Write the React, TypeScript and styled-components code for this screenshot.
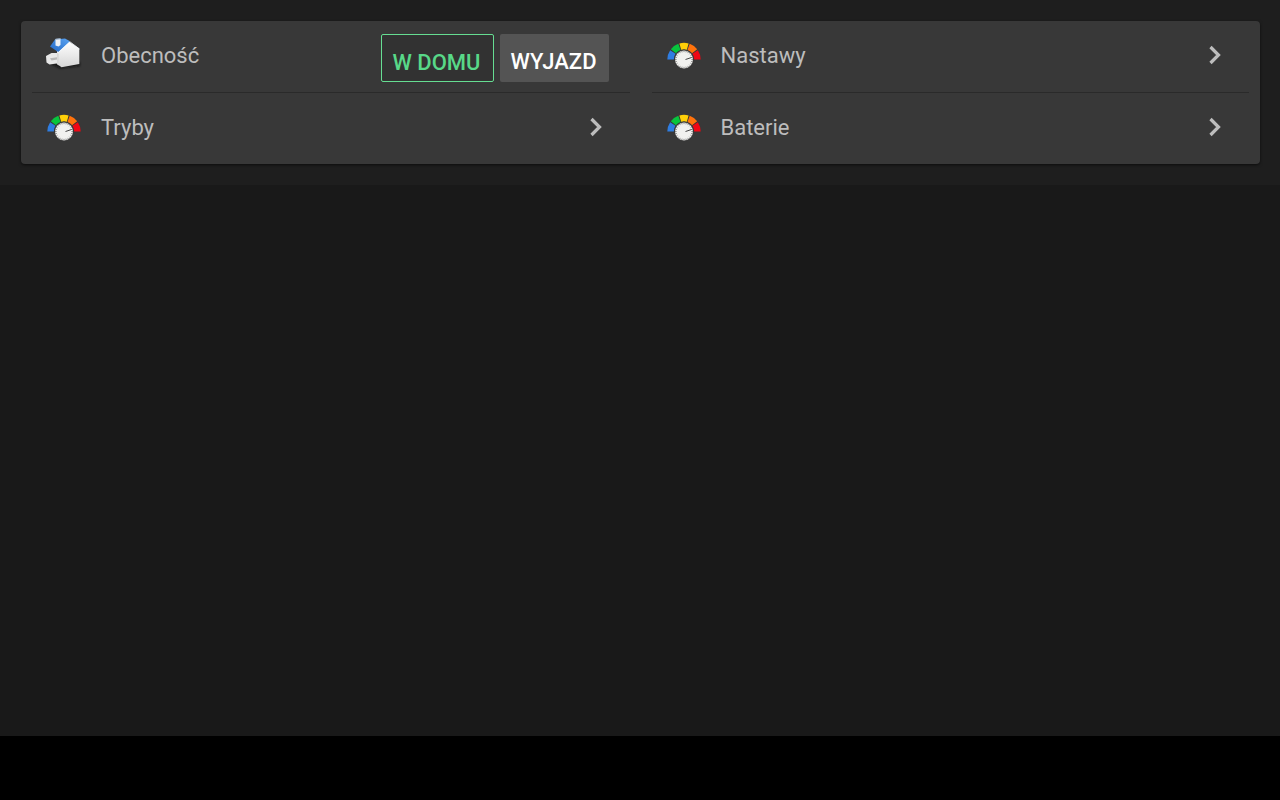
import React, { useState } from "react";
import styled, { createGlobalStyle, css } from "styled-components";

const GlobalStyle = createGlobalStyle`
  body {
    margin: 0;
    background: #191919;
    font-family: Roboto, "Noto Sans", sans-serif;
  }
`;

const Screen = styled.div`
  display: flex;
  flex-direction: column;
  min-height: 100vh;
`;

const Content = styled.main`
  padding: 21px 20px 21px 21px;
  background: #1e1e1e;
`;

const Panel = styled.div`
  display: grid;
  grid-template-columns: 1fr 1fr;
  background: #383838;
  border-radius: 4px;
  box-shadow: 0 1px 3px rgba(0, 0, 0, 0.6);
`;

const Column = styled.div`
  display: flex;
  flex-direction: column;
  min-width: 0;
  padding: 0 11px;
`;

const rowLayout = css`
  display: flex;
  align-items: center;
  height: 68px;
  padding: 0 21px 3px 14px;
  color: #bdbdbd;
  font-size: 22px;
  line-height: 26px;

  &:not(:last-child) {
    border-bottom: 1px solid #2a2a2a;
  }
`;

const Row = styled.div`
  ${rowLayout}
`;

const LinkRow = styled.a`
  ${rowLayout}
  text-decoration: none;
`;

const Label = styled.span`
  flex: 1;
  margin-left: 19px;
  padding-top: 2px;
`;

const Icon = styled.svg`
  flex: none;
  width: 36px;
  height: 36px;
`;

const Chevron = styled.svg`
  flex: none;
  width: 26px;
  height: 26px;
`;

const Choices = styled.div`
  display: flex;
  gap: 6px;
  padding-top: 6px;
`;

const Choice = styled.button<{ $active: boolean }>`
  box-sizing: border-box;
  height: 48px;
  padding: ${(p) => (p.$active ? "9px 12px 0 11px" : "7px 12px 0 11px")};
  border: ${(p) => (p.$active ? "1px solid #66dd92" : "0")};
  border-radius: 2px;
  background: ${(p) => (p.$active ? "#323232" : "#545454")};
  color: ${(p) => (p.$active ? "#58d888" : "#ffffff")};
  font-family: inherit;
  font-size: 22px;
  font-weight: 500;
  line-height: 26px;
  cursor: pointer;
`;

const NavigationBar = styled.footer`
  height: 64px;
  margin-top: auto;
  background: #000;
`;

const CX = 18;
const CY = 22.5;

const point = (radius: number, degrees: number) => {
  const a = (degrees * Math.PI) / 180;
  return `${(CX + radius * Math.cos(a)).toFixed(2)} ${(CY - radius * Math.sin(a)).toFixed(2)}`;
};

const segment = (from: number, to: number) =>
  `M${point(16.7, from)}A16.7 16.7 0 0 1 ${point(16.7, to)}L${point(10.2, to)}A10.2 10.2 0 0 0 ${point(10.2, from)}Z`;

const gaugeColors = ["#2f7de1", "#08c53d", "#ffd008", "#ff720b", "#ef0715"];

const GaugeIcon = () => (
  <Icon viewBox="0 0 36 36" aria-hidden="true">
    {gaugeColors.map((color, i) => (
      <path key={color} d={segment(180 - i * 36 - (i ? 2 : 0), 144 - i * 36 + (i < 4 ? 2 : 0))} fill={color} />
    ))}
    <circle cx={CX} cy={CY} r="9.8" fill="#383838" />
    <circle cx={CX} cy={CY} r="9" fill="#f1f1ef" />
    {Array.from({ length: 24 }, (_, i) => (
      <path key={i} d={`M${point(7.4, i * 15)}L${point(9, i * 15)}`} stroke="#777" strokeWidth="0.8" />
    ))}
    <path d="M19.5 22.5L25.5 20.5" stroke="#333" strokeWidth="0.9" />
  </Icon>
);

const HouseIcon = () => (
  <Icon viewBox="0 -1 36 36" aria-hidden="true">
    <defs>
      <linearGradient id="wall" x1="0" y1="0" x2="0" y2="1">
        <stop offset="0" stopColor="#fff" />
        <stop offset="1" stopColor="#d6d6d6" />
      </linearGradient>
      <linearGradient id="roof" x1="0" y1="1" x2="1" y2="0">
        <stop offset="0" stopColor="#2368c6" />
        <stop offset="1" stopColor="#5ba4f2" />
      </linearGradient>
      <filter id="soft" x="-20%" y="-60%" width="140%" height="220%">
        <feGaussianBlur stdDeviation="1" />
      </filter>
    </defs>
    <path d="M3 25L14 30.5L34 28V24Z" fill="#111" opacity="0.75" filter="url(#soft)" />
    <path d="M0 18L5.5 15H13V27L10.5 25.5L3.5 26.5L0.5 24.5Z" fill="#e8e8e8" />
    <path d="M4 20.3L11 19.2V21.5L5.5 22.5Z" fill="#b8b8b8" />
    <path d="M8 9L12.2 13L23 3.5L33.3 10.5V26L15.5 29.2L11 26V13Z" fill="url(#wall)" />
    <path d="M11 14.5L12.8 16V27.5L11 26Z" fill="#d8d8d8" />
    <path d="M4 8.5L9 1.5L19 0.5L24 3.3L12.2 14Z" fill="url(#roof)" />
    <path d="M12.5 14.5L24 3.8L33.5 11" fill="none" stroke="#f5faff" strokeWidth="0.8" />
    <path d="M9.5 1L14.5 0.5V7L12.5 8.5L9.5 7.5Z" fill="#eef1f5" />
    <path d="M9.5 0.8L14.5 0.3V1.3L10 1.8Z" fill="#8da8c8" />
  </Icon>
);

const Arrow = () => (
  <Chevron viewBox="0 0 26 26" aria-hidden="true">
    <path d="M8.5 5L16.5 13L8.5 21" fill="none" stroke="#bdbdbd" strokeWidth="3.2" />
  </Chevron>
);

const NavigationRow = ({ label }: { label: string }) => (
  <LinkRow href="#">
    <GaugeIcon />
    <Label>{label}</Label>
    <Arrow />
  </LinkRow>
);

const presenceModes = ["W DOMU", "WYJAZD"];

export default function App() {
  const [presence, setPresence] = useState(presenceModes[0]);

  return (
    <Screen>
      <GlobalStyle />
      <Content>
        <Panel>
          <Column>
            <Row>
              <HouseIcon />
              <Label id="presence-label">Obecność</Label>
              <Choices role="group" aria-labelledby="presence-label">
                {presenceModes.map((mode) => (
                  <Choice
                    key={mode}
                    type="button"
                    $active={mode === presence}
                    aria-pressed={mode === presence}
                    onClick={() => setPresence(mode)}
                  >
                    {mode}
                  </Choice>
                ))}
              </Choices>
            </Row>
            <NavigationRow label="Tryby" />
          </Column>
          <Column>
            <NavigationRow label="Nastawy" />
            <NavigationRow label="Baterie" />
          </Column>
        </Panel>
      </Content>
      <NavigationBar />
    </Screen>
  );
}
